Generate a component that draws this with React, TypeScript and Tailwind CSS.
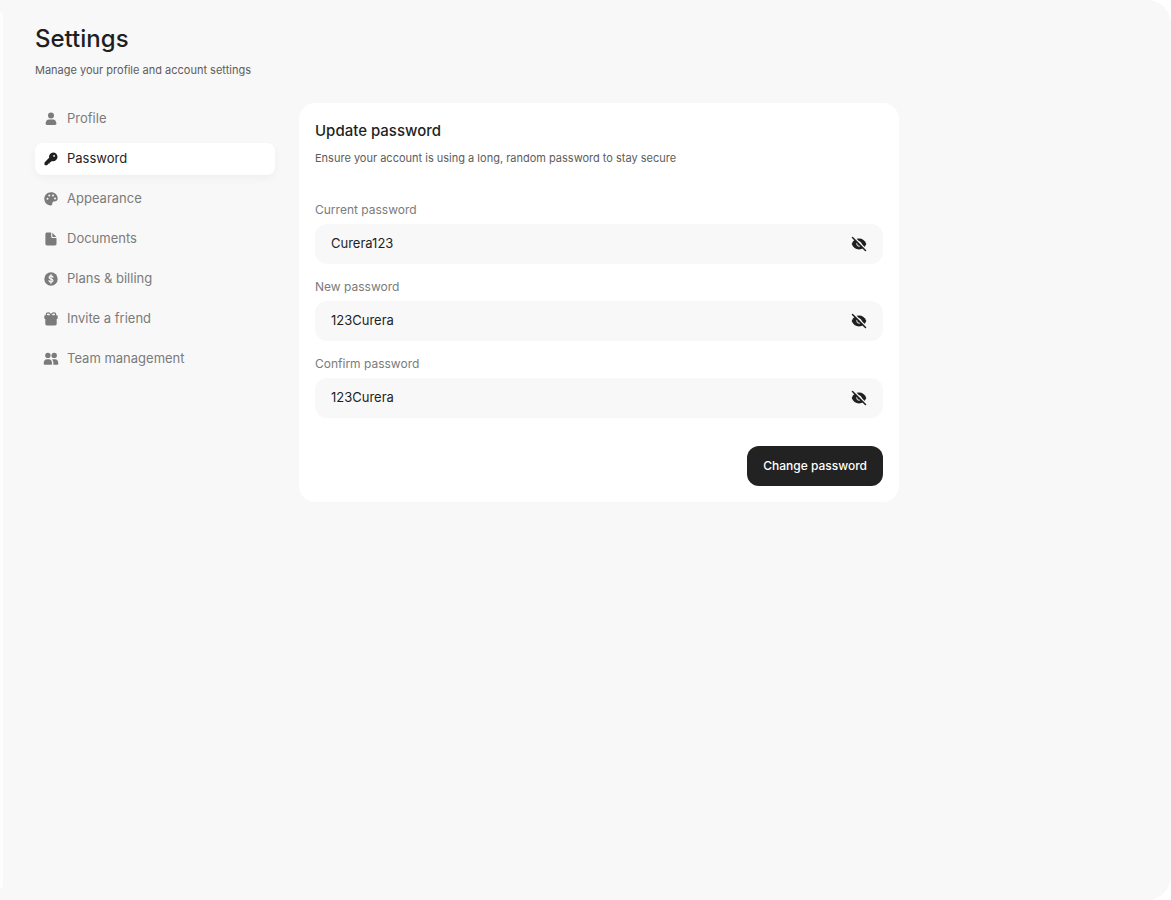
import { useState, type ReactNode } from "react";

function Icon({ children }: { children: ReactNode }) {
  return (
    <svg viewBox="0 0 16 16" fill="currentColor" aria-hidden="true" className="size-4 shrink-0">
      {children}
    </svg>
  );
}

const navItems = [
  {
    label: "Profile",
    icon: (
      <>
        <circle cx="8" cy="4.500" r="3" />
        <path d="M5.800 8.400h4.400c1.700 0 2.900 1.500 3.200 3.900.1.900-.5 1.700-1.400 1.700H4c-.9 0-1.500-.8-1.400-1.700.3-2.400 1.500-3.900 3.200-3.900z" />
      </>
    ),
  },
  {
    label: "Password",
    icon: (
      <path
        fillRule="evenodd"
        d="M10.200 1.500a4.300 4.300 0 0 1 4.300 4.300 4.300 4.300 0 0 1-5.500 4.200L7.500 11.300H6.700v1.200H5.600L4.300 13.900c-.3.3-.6.400-1 .4H2.300c-.5 0-.8-.3-.8-.8v-1.400c0-.3.1-.6.300-.8l4.300-4.500A4.300 4.300 0 0 1 10.200 1.500zm.9 2.500a.9.9 0 1 0 0 1.800.9.900 0 0 0 0-1.800z"
      />
    ),
  },
  {
    label: "Appearance",
    icon: (
      <path
        fillRule="evenodd"
        d="M8 1.300c3.800 0 6.700 2.700 6.700 6 0 2.200-1.500 3.200-3.400 3.200-1.300 0-1.900.6-1.900 1.500 0 1.200-.3 2.400-1.900 2.400-3.400 0-6.200-2.900-6.200-6.600C1.300 4.200 4.300 1.300 8 1.300zM4.500 6.700a1 1 0 1 0 0 2 1 1 0 0 0 0-2zM6.300 3.600a1 1 0 1 0 0 2 1 1 0 0 0 0-2zm3.700 0a1 1 0 1 0 0 2 1 1 0 0 0 0-2zm2 2.900a1 1 0 1 0 0 2 1 1 0 0 0 0-2z"
      />
    ),
  },
  {
    label: "Documents",
    icon: (
      <>
        <path d="M4 1.600h4.200v3.800c0 1 .6 1.600 1.600 1.600h3.700v5.800c0 .9-.7 1.600-1.600 1.600H4c-.9 0-1.600-.7-1.600-1.600V3.200c0-.9.7-1.600 1.600-1.600z" />
        <path d="M9.300 1.700 13.400 5.900H9.900c-.4 0-.6-.2-.6-.6z" />
      </>
    ),
  },
  {
    label: "Plans & billing",
    icon: (
      <>
        <circle cx="8" cy="8" r="6.700" />
        <path
          d="M10 6.300C9.900 5.400 9.100 4.900 8 4.900S6.100 5.400 6.100 6.400c0 2.100 3.900 1 3.900 3.200 0 1-.9 1.500-2 1.500S6 10.600 6 9.600M8 3.700v8.600"
          fill="none"
          stroke="#f8f8f8"
          strokeWidth="1.200"
          strokeLinecap="round"
        />
      </>
    ),
  },
  {
    label: "Invite a friend",
    icon: (
      <>
        <path d="M2 4.300h12c.4 0 .7.300.7.700v2.200c0 .4-.3.700-.7.700h-.3v4.900c0 .9-.7 1.600-1.600 1.600H3.900c-.9 0-1.600-.7-1.600-1.600V7.900H2c-.4 0-.7-.3-.7-.7V5c0-.4.300-.7.700-.7z" />
        <path
          d="M8 4.800C7.600 2.900 6.600 1.800 5.200 1.800c-1.100 0-1.900.7-1.900 1.600 0 .8.700 1.400 1.500 1.400M8 4.800c.4-1.900 1.400-3 2.800-3 1.100 0 1.900.7 1.900 1.600 0 .8-.7 1.400-1.500 1.400"
          fill="none"
          stroke="currentColor"
          strokeWidth="1.300"
        />
      </>
    ),
  },
  {
    label: "Team management",
    icon: (
      <>
        <circle cx="4.900" cy="4.400" r="2.700" />
        <circle cx="11.200" cy="4.400" r="2.700" />
        <path d="M3.700 8.300h2.400c1.600 0 2.800 1.400 3 3.900.1.900-.4 1.600-1.200 1.600H2c-.9 0-1.400-.7-1.300-1.600.2-2.500 1.400-3.900 3-3.900zM9.100 8.600c.4-.2.900-.3 1.300-.3h1.900c1.600 0 2.800 1.400 3 3.900.1.900-.4 1.600-1.200 1.600h-4c.3-.5.400-1.100.3-1.700-.1-1.400-.5-2.600-1.300-3.500z" />
      </>
    ),
  },
];

const fields = [
  { id: "current-password", label: "Current password", value: "Curera123" },
  { id: "new-password", label: "New password", value: "123Curera" },
  { id: "confirm-password", label: "Confirm password", value: "123Curera" },
];

function PasswordField({ id, label, value }: { id: string; label: string; value: string }) {
  const [text, setText] = useState(value);
  const [visible, setVisible] = useState(true);
  return (
    <div className="flex flex-col gap-1">
      <label htmlFor={id} className="text-xs leading-[21px] text-[#7b7b7b]">
        {label}
      </label>
      <div className="flex h-10 items-center rounded-xl bg-[#f8f8f8] px-4">
        <input
          id={id}
          type={visible ? "text" : "password"}
          value={text}
          onChange={(e) => setText(e.target.value)}
          className="min-w-0 flex-1 bg-transparent text-[13px] text-[#1f1f1f] outline-none"
        />
        <button
          type="button"
          aria-label={visible ? "Hide password" : "Show password"}
          onClick={() => setVisible(!visible)}
          className="text-[#1f1f1f]"
        >
          <Icon>
            <path d="M8 2.600c3.400 0 6 2 7.300 5.400C14 11.400 11.400 13.400 8 13.400S2 11.400.7 8C2 4.600 4.600 2.600 8 2.600z" />
            <circle cx="8" cy="8" r="2.200" fill="none" stroke="#f8f8f8" strokeWidth="1" />
            <path d="M2.600.9 15.600 13.900" stroke="#f8f8f8" strokeWidth="1.500" />
            <path d="M1.500 1.500 14.500 14.500" stroke="currentColor" strokeWidth="1.500" strokeLinecap="round" />
          </Icon>
        </button>
      </div>
    </div>
  );
}

export default function App() {
  return (
    <div className="flex min-h-screen rounded-r-3xl bg-[#f8f8f8] font-['Inter',sans-serif] text-[#1f1f1f]">
      <div className="my-3 w-[3px] shrink-0 rounded-r-2xl bg-[#fdfdfd]" />
      <main className="min-w-0 flex-1 px-8 pt-[23px]">
        <header>
          <h1 className="text-2xl leading-8 font-medium">Settings</h1>
          <p className="mt-1.5 text-[11px] leading-[18px] text-[#5c5c5c]">Manage your profile and account settings</p>
        </header>
        <div className="mt-6 flex items-start gap-6">
          <nav aria-label="Settings" className="flex w-60 shrink-0 flex-col gap-2">
            {navItems.map((item) => (
              <a
                key={item.label}
                href="#"
                aria-current={item.label === "Password" ? "page" : undefined}
                className={
                  item.label === "Password"
                    ? "flex h-8 items-center gap-2 rounded-lg bg-white px-2 text-[13px] text-[#1f1f1f] shadow-[0_3px_8px_rgba(0,0,0,0.04)]"
                    : "flex h-8 items-center gap-2 rounded-lg px-2 text-[13px] text-[#7b7b7b]"
                }
              >
                <Icon>{item.icon}</Icon>
                {item.label}
              </a>
            ))}
          </nav>
          <form
            onSubmit={(e) => e.preventDefault()}
            className="flex max-w-[600px] min-w-0 flex-1 flex-col rounded-2xl bg-white p-4"
          >
            <h2 className="text-[15px] leading-6 font-medium">Update password</h2>
            <p className="mt-1.5 text-[11px] leading-[18px] text-[#5c5c5c]">
              Ensure your account is using a long, random password to stay secure
            </p>
            <div className="mt-8 flex flex-col gap-3">
              {fields.map((field) => (
                <PasswordField key={field.id} {...field} />
              ))}
            </div>
            <button
              type="submit"
              className="mt-7 h-10 self-end rounded-xl bg-[#222222] px-4 text-xs font-medium text-white"
            >
              Change password
            </button>
          </form>
        </div>
      </main>
    </div>
  );
}
